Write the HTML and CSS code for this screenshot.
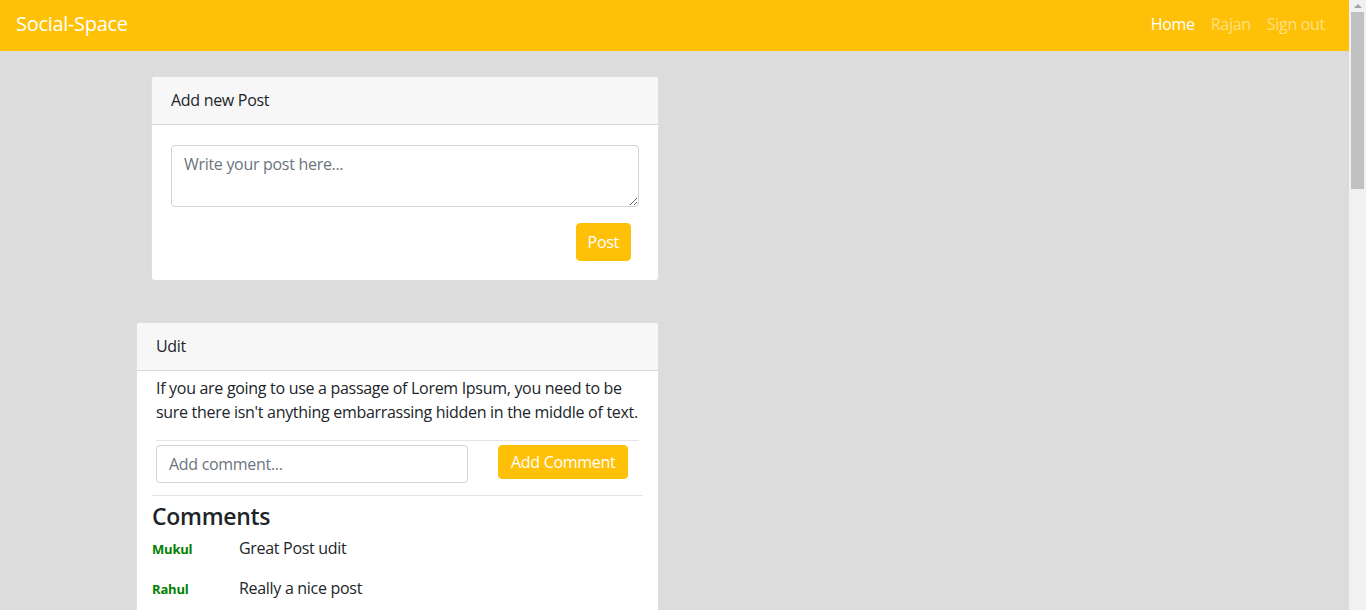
FILE: index.html
```html
<!DOCTYPE html>
<html>
<head>
<meta charset="utf-8">
<link rel="stylesheet" href="styles.css">
</head>
<body>
<div class="page">
<nav class="navbar">
  <a class="brand" href="#">Social-Space</a>
  <ul class="nav">
    <li><a class="nav-link active" href="#">Home</a></li>
    <li><a class="nav-link" href="#">Rajan</a></li>
    <li><a class="nav-link" href="#">Sign out</a></li>
  </ul>
</nav>
<main class="main">
  <section class="card card-new">
    <div class="card-header">Add new Post</div>
    <div class="card-body">
      <textarea class="textarea" placeholder="Write your post here..."></textarea>
      <div class="actions"><button class="btn btn-post">Post</button></div>
    </div>
  </section>

  <section class="card card-post">
    <div class="card-header">Udit</div>
    <div class="post-body">
      <p class="post-text">If you are going to use a passage of Lorem Ipsum, you need to be sure there isn't anything embarrassing hidden in the middle of text.</p>
      <div class="comment-form">
        <input class="input" type="text" placeholder="Add comment...">
        <button class="btn btn-comment">Add Comment</button>
      </div>
    </div>
    <div class="comments">
      <h3 class="comments-title">Comments</h3>
      <div class="comment"><span class="author">Mukul</span><span class="ctext">Great Post udit</span></div>
      <div class="comment"><span class="author">Rahul</span><span class="ctext">Really a nice post</span></div>
    </div>
  </section>
</main>
</div>
<div class="scrollbar" aria-hidden="true">
  <div class="sb-arrow"></div>
  <div class="sb-thumb"></div>
</div>
</body>
</html>
```
FILE: styles.css
```css
* { box-sizing: border-box; }
html, body { margin: 0; padding: 0; }
body {
  background: #dcdcdc;
  font-family: "Open Sans", "Liberation Sans", sans-serif;
  font-size: 16px;
  line-height: 24px;
  letter-spacing: -0.3px;
  color: #212529;
}
.page { margin-right: 17px; }

.scrollbar {
  position: fixed;
  top: 0;
  right: 0;
  width: 17px;
  height: 100vh;
  background: #f1f1f1;
  display: flex;
  flex-direction: column;
  align-items: center;
}
.sb-arrow {
  margin-top: 4px;
  width: 0;
  height: 0;
  border-left: 4px solid transparent;
  border-right: 4px solid transparent;
  border-bottom: 4px solid #a3a3a3;
}
.sb-thumb {
  margin-top: 4px;
  width: 13px;
  height: 177px;
  background: #c1c1c1;
}

.navbar {
  height: 51px;
  background: #ffc107;
  display: flex;
  align-items: center;
  justify-content: space-between;
  padding: 0 16px 3px;
}
.brand {
  color: #fff;
  font-size: 20px;
  text-decoration: none;
  line-height: 30px;
}
.nav {
  list-style: none;
  margin: 0;
  padding: 0;
  display: flex;
}
.nav-link {
  display: block;
  padding: 8px;
  color: rgba(255,255,255,0.5);
  text-decoration: none;
}
.nav-link.active { color: #fff; }

.main {
  padding: 25px 0 40px;
  min-height: 700px;
}
.card {
  background: #fff;
  border: 1px solid rgba(0,0,0,0.125);
  border-radius: 4px;
}
.card-new {
  margin-left: 151px;
  width: 508px;
}
.card-post {
  margin-left: 136px;
  width: 523px;
  margin-top: 41px;
}
.card-header {
  background: #f7f7f7;
  border-bottom: 1px solid rgba(0,0,0,0.125);
  padding: 11px 19px 12px;
  border-radius: 4px 4px 0 0;
}
.card-body { padding: 20px 19px 19px; }
.textarea {
  display: block;
  width: 100%;
  height: 62px;
  border: 1px solid #ced4da;
  border-radius: 4px;
  padding: 6px 12px;
  font: inherit;
  letter-spacing: inherit;
  color: #495057;
  resize: vertical;
}
.textarea::placeholder, .input::placeholder { color: #6c757d; }
.actions {
  display: flex;
  justify-content: flex-end;
  padding: 16px 8px 0 0;
}
.btn {
  background: #ffc107;
  border: 1px solid #ffc107;
  color: #fff;
  font: inherit;
  letter-spacing: inherit;
  border-radius: 4px;
}
.btn-post { height: 38px; padding: 0 11px; }

.post-body { padding: 5px 19px 0; }
.post-text {
  margin: 0;
  padding-bottom: 16px;
  border-bottom: 1px solid rgba(0,0,0,0.1);
}
.comment-form {
  display: flex;
  align-items: flex-start;
  gap: 30px;
  padding: 4px 0 12px;
}
.input {
  width: 312px;
  height: 38px;
  border: 1px solid #ced4da;
  border-radius: 4px;
  padding: 6px 12px;
  font: inherit;
  letter-spacing: inherit;
}
.btn-comment { height: 34px; padding: 0 12px; font-size: 16px; }
.comments {
  margin: 0 15px;
  border-top: 1px solid rgba(0,0,0,0.1);
  padding: 4px 0 40px;
}
.comments-title {
  margin: 0 0 4px;
  font-size: 23px;
  font-weight: 600;
  line-height: 32px;
}
.comment {
  display: flex;
  align-items: baseline;
  height: 40px;
}
.author {
  width: 87px;
  color: #008000;
  font-weight: 700;
  font-size: 13px;
  letter-spacing: -0.2px;
}
.ctext { font-size: 16px; }
```
